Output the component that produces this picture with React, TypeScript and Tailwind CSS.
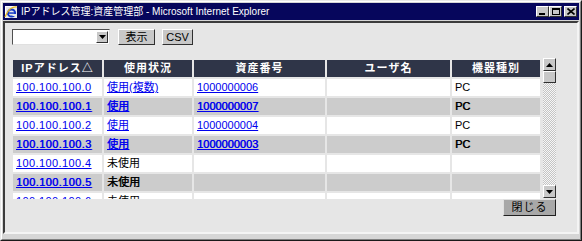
import React from "react";

type Row = {
  ip: string;
  status: string;
  used: boolean;
  asset: string;
  kind: string;
};

const rows: Row[] = [
  { ip: "100.100.100.0", status: "使用(複数)", used: true, asset: "1000000006", kind: "PC" },
  { ip: "100.100.100.1", status: "使用", used: true, asset: "1000000007", kind: "PC" },
  { ip: "100.100.100.2", status: "使用", used: true, asset: "1000000004", kind: "PC" },
  { ip: "100.100.100.3", status: "使用", used: true, asset: "1000000003", kind: "PC" },
  { ip: "100.100.100.4", status: "未使用", used: false, asset: "", kind: "" },
  { ip: "100.100.100.5", status: "未使用", used: false, asset: "", kind: "" },
  { ip: "100.100.100.6", status: "未使用", used: false, asset: "", kind: "" },
];

const headers = ["IPアドレス△", "使用状況", "資産番号", "ユーザ名", "機器種別"];

function IeIcon() {
  return (
    <svg width="14" height="14" viewBox="0 0 14 14" className="shrink-0">
      <rect x="1" y="1" width="12" height="12" fill="#e8e8e8" />
      <path d="M1 1h12v1H2v11H1z" fill="#ffffff" />
      <circle cx="7.5" cy="8" r="3.6" fill="none" stroke="#1438c8" strokeWidth="2" />
      <rect x="4" y="7.3" width="7" height="1.5" fill="#1438c8" />
      <rect x="8.5" y="9" width="4" height="2" fill="#e8e8e8" />
      <path d="M1 12 C4 4 9 1 13 2" fill="none" stroke="#e8b820" strokeWidth="1.2" />
    </svg>
  );
}

function TitleButton({ children, className = "" }: { children: React.ReactNode; className?: string }) {
  return (
    <div
      className={`w-[13px] h-[11px] bg-[#c8c8c8] border border-t-white border-l-white border-r-[#303030] border-b-[#303030] flex items-center justify-center ${className}`}
    >
      {children}
    </div>
  );
}

function ArrowButton({ up }: { up: boolean }) {
  return (
    <div className="w-[13px] h-[13px] shrink-0 bg-[#c8c8c8] border border-t-white border-l-white border-r-[#303030] border-b-[#303030] flex items-center justify-center">
      <svg width="7" height="4" viewBox="0 0 7 4">
        {up ? <path d="M3.5 0L7 4H0z" fill="#000" /> : <path d="M0 0h7L3.5 4z" fill="#000" />}
      </svg>
    </div>
  );
}

function Cell({ children, gray }: { children?: React.ReactNode; gray: boolean }) {
  return (
    <div
      className={`flex items-center overflow-hidden whitespace-nowrap leading-none pl-[3px] ${
        gray ? "bg-[#cccccc] [text-shadow:0.4px_0_0_currentColor]" : "bg-white"
      }`}
    >
      {children}
    </div>
  );
}

function Link({ children }: { children: React.ReactNode }) {
  return <a className="text-[#0000ee] underline underline-offset-1 cursor-pointer">{children}</a>;
}

export default function App() {
  return (
    <div className="w-[582px] h-[241px] font-['Liberation_Sans','Noto_Sans_CJK_JP',sans-serif] border border-t-[#e8e8e8] border-l-[#e8e8e8] border-r-[#1a1a1a] border-b-[#1a1a1a] bg-[#d6d6d6]">
      <div className="h-full flex flex-col border border-t-white border-l-white border-r-[#808080] border-b-[#808080] pt-[1px] px-[1px] pb-[5px]">
        {/* Title bar */}
        <div className="h-[17px] shrink-0 bg-[#06065c] flex items-center pl-[1px] pr-[2px]">
          <IeIcon />
          <span className="ml-[3px] text-[10px] leading-none text-white whitespace-nowrap">
            IPアドレス管理:資産管理部 - Microsoft Internet Explorer
          </span>
          <div className="ml-auto flex items-center">
            <TitleButton>
              <div className="w-[6px] h-[2px] bg-black mt-[5px] -ml-[2px]" />
            </TitleButton>
            <TitleButton>
              <div className="w-[8px] h-[7px] border border-black border-t-2" />
            </TitleButton>
            <TitleButton className="ml-[2px]">
              <svg width="8" height="7" viewBox="0 0 8 7">
                <path d="M0.5 0.5L7.5 6.5M7.5 0.5L0.5 6.5" stroke="#000" strokeWidth="1.6" />
              </svg>
            </TitleButton>
          </div>
        </div>

        {/* Page content */}
        <div className="mt-[1px] flex-1 border-2 border-t-[#3c3c3c] border-l-[#3c3c3c] border-r-[#f4f4f4] border-b-[#f4f4f4] bg-[#e6e6e6] pl-[7px] pt-[6px] overflow-hidden">
          {/* Controls */}
          <div className="flex items-center h-[16px] text-[11px] leading-none text-black">
            <div className="w-[98px] h-[16px] bg-white border border-t-[#505050] border-l-[#505050] border-r-[#e0e0e0] border-b-[#e0e0e0] flex justify-end items-center pr-[1px]">
              <div className="w-[12px] h-[12px] bg-[#c8c8c8] border border-t-white border-l-white border-r-[#303030] border-b-[#303030] flex items-center justify-center">
                <svg width="7" height="4" viewBox="0 0 7 4">
                  <path d="M0 0h7L3.5 4z" fill="#000" />
                </svg>
              </div>
            </div>
            <button className="ml-[8px] w-[37px] h-[16px] bg-[#c8c8c8] border border-t-white border-l-white border-r-[#303030] border-b-[#303030] flex items-center justify-center">
              表示
            </button>
            <button className="ml-[7px] w-[31px] h-[16px] bg-[#c8c8c8] border border-t-white border-l-white border-r-[#303030] border-b-[#303030] flex items-center justify-center">
              CSV
            </button>
          </div>

          {/* Table with scrollbar */}
          <div className="mt-[13px] ml-[1px] w-[543px] flex flex-col">
            <div className="flex h-[141px]">
              <div className="w-[527px] pt-[2px] overflow-hidden text-[11px] text-black">
                <div className="grid grid-cols-[89px_88px_131px_123px_88px] auto-rows-[17px] gap-[2px]">
                  {headers.map((h) => (
                    <div
                      key={h}
                      className="bg-[#2f3548] text-white font-bold flex items-center justify-center leading-none tracking-[1px]"
                    >
                      {h}
                    </div>
                  ))}
                  {rows.map((r, i) => {
                    const gray = i % 2 === 1;
                    return (
                      <React.Fragment key={r.ip}>
                        <Cell gray={gray}>
                          <span className="tracking-[0.4px]">
                            <Link>{r.ip}</Link>
                          </span>
                        </Cell>
                        <Cell gray={gray}>{r.used ? <Link>{r.status}</Link> : r.status}</Cell>
                        <Cell gray={gray}>{r.asset && <Link>{r.asset}</Link>}</Cell>
                        <Cell gray={gray} />
                        <Cell gray={gray}>{r.kind}</Cell>
                      </React.Fragment>
                    );
                  })}
                </div>
              </div>
              {/* Scrollbar */}
              <div className="ml-[3px] w-[13px] h-[140px] flex flex-col">
                <ArrowButton up />
                <div className="h-[12px] shrink-0 bg-[#c8c8c8] border border-t-white border-l-white border-r-[#303030] border-b-[#303030]" />
                <div className="flex-1 bg-[image:repeating-conic-gradient(#c4c4c4_0%_25%,#f6f6f6_0%_50%)] bg-[length:2px_2px]" />
                <ArrowButton up={false} />
              </div>
            </div>
            <div className="flex justify-end">
              <button className="w-[53px] h-[17px] bg-[#a8a8a8] border border-t-[#e0e0e0] border-l-[#e0e0e0] border-r-[#202020] border-b-[#202020] text-[11px] leading-none text-black flex items-center justify-center tracking-[1px]">
                閉じる
              </button>
            </div>
          </div>
        </div>
      </div>
    </div>
  );
}
